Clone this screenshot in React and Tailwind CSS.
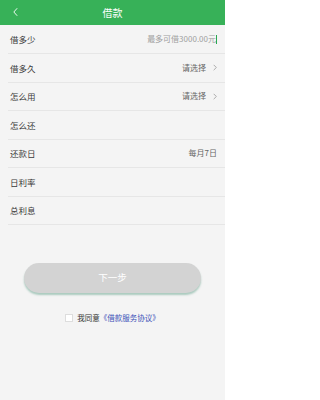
import React from 'react';

const rows = [
    { label: '借多少', value: '最多可借3000.00元', cursor: true },
    { label: '借多久', value: '请选择', arrow: true },
    { label: '怎么用', value: '请选择', arrow: true },
    { label: '怎么还' },
    { label: '还款日', value: '每月7日' },
    { label: '日利率' },
    { label: '总利息' },
];

const Chevron = ({ className }) => (
    <svg viewBox="0 0 6 10" className={className} fill="none" stroke="currentColor" strokeWidth="1">
        <path d="M1 1l4 4-4 4" />
    </svg>
);

const App = () => {
    return (
        <div
            className="w-[225px] h-[400px] bg-[#f4f4f4] flex flex-col"
            style={{ fontFamily: '"Noto Sans CJK SC", "Liberation Sans", sans-serif' }}
        >
            {/* header */}
            <div className="h-[25px] bg-[#37b158] flex items-center relative">
                <svg viewBox="0 0 6 10" className="absolute left-[13px] top-[7px] w-[5px] h-[10px] text-white" fill="none" stroke="currentColor" strokeWidth="1.1">
                    <path d="M5 0.5L1 5l4 4.5" />
                </svg>
                <div className="flex-1 text-center text-white text-[10px] leading-none">借款</div>
            </div>

            {/* form rows */}
            <div className="flex flex-col">
                {rows.map((row, i) => (
                    <div
                        key={i}
                        className={`flex items-center ml-[8px] pr-[8px] border-b border-[#e6e6e6] ${i === 0 ? 'h-[29px]' : 'h-[28.5px]'}`}
                    >
                        <span className="pl-[2px] text-[8.5px] text-[#3a3a3a] leading-none">{row.label}</span>
                        <div className="flex-1" />
                        {row.value && (
                            <span className={`text-[8px] leading-none ${row.cursor ? 'text-[#a0a0a0]' : 'text-[#666]'}`}>
                                {row.value}
                            </span>
                        )}
                        {row.cursor && <span className="w-[1px] h-[9px] bg-[#2aa84f]" />}
                        {row.arrow && <Chevron className="w-[4px] h-[7px] ml-[7px] text-[#888]" />}
                    </div>
                ))}
            </div>

            {/* next button */}
            <div className="flex justify-center mt-[38px]">
                <div className="w-[177px] h-[30px] rounded-full bg-[#d3d3d3] flex items-center justify-center shadow-[0_2px_2px_rgba(60,140,110,0.4)]">
                    <span className="text-white text-[9.5px] leading-none">下一步</span>
                </div>
            </div>

            {/* agreement */}
            <div className="flex items-center justify-center mt-[21px] gap-[4px]">
                <span className="w-[8px] h-[8px] bg-white border border-[#ddd]" />
                <span className="text-[7.5px] leading-none text-[#333]">
                    我同意<span className="text-[#3b4fb8]">《借款服务协议》</span>
                </span>
            </div>
        </div>
    );
};

export default App;
